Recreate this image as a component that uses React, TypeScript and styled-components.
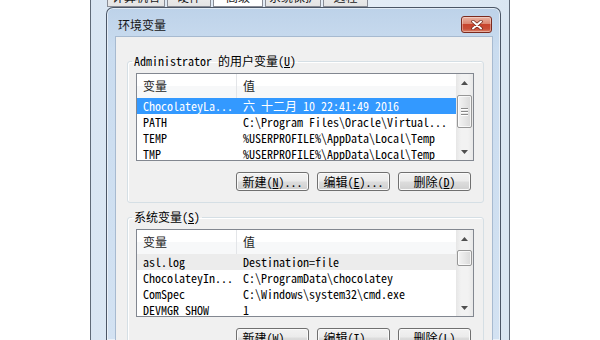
import styled, { createGlobalStyle } from "styled-components";

const GlobalStyle = createGlobalStyle`
    html, body {
        margin: 0;
        padding: 0;
        background: #ffffff;
    }
    body {
        width: 600px;
        height: 340px;
        overflow: hidden;
        font-family: "Noto Sans Mono CJK SC", "Liberation Mono", "Noto Sans CJK SC", monospace;
        font-size: 12px;
        color: #000;
    }
`;

const Desktop = styled.div`
    width: 600px;
    height: 340px;
    padding-left: 90px;
    box-sizing: border-box;
    overflow: hidden;
`;

const OuterWindow = styled.div`
    width: 420px;
    height: 340px;
    box-sizing: border-box;
    border-left: 1px solid #5f6a78;
    border-right: 1px solid #5f6a78;
    background: linear-gradient(to right, #d9e6f3, #e6eef7 60%, #dae6f2);
    padding-left: 15px;
    display: flex;
    flex-direction: column;
    overflow: hidden;
`;

const TabStrip = styled.div`
    height: 7px;
    display: flex;
    align-items: flex-end;
    gap: 2px;
    padding-left: 1px;
    overflow: hidden;
    flex-shrink: 0;
`;

const Tab = styled.div<{ $w: number; $active?: boolean }>`
    width: ${(p) => p.$w}px;
    height: 20px;
    flex-shrink: 0;
    box-sizing: border-box;
    padding-top: 2px;
    line-height: 14px;
    text-align: center;
    border: 1px solid #898c95;
    font-family: "Noto Sans CJK SC", sans-serif;
    font-size: 12px;
    color: #1a1a1a;
    background: ${(p) =>
        p.$active ? "#ffffff" : "linear-gradient(#f2f2f2, #e4e4e4)"};
`;

const Dialog = styled.div`
    width: 395px;
    flex: 1;
    min-height: 0;
    box-sizing: border-box;
    border: 1px solid #4b5666;
    border-bottom: none;
    border-radius: 7px 7px 0 0;
    background: linear-gradient(180deg, #bdd2e9 0%, #cadcef 12%, #d3e2f2 100%);
    box-shadow: inset 0 0 0 1px rgba(255, 255, 255, 0.55);
    padding: 0 7px 0 8px;
    display: flex;
    flex-direction: column;
`;

const TitleBar = styled.div`
    height: 28px;
    display: flex;
    align-items: flex-start;
    justify-content: space-between;
    padding: 0 1px 0 3px;
    flex-shrink: 0;
`;

const TitleText = styled.span`
    font-family: "Noto Sans CJK SC", sans-serif;
    font-size: 12px;
    line-height: 16px;
    margin-top: 9px;
    color: #141414;
`;

const CloseButton = styled.div`
    width: 31px;
    height: 17px;
    margin-top: 8px;
    box-sizing: border-box;
    border: 1px solid #7b2a1e;
    border-radius: 3px;
    background: linear-gradient(
        180deg,
        #eab2a3 0%,
        #dc8670 45%,
        #c8442d 50%,
        #c94f38 80%,
        #dd8a72 100%
    );
    box-shadow: inset 0 0 0 1px rgba(255, 255, 255, 0.35);
    display: flex;
    align-items: center;
    justify-content: center;
`;

const Client = styled.div`
    flex: 1;
    background: #f0f0f0;
    border: 1px solid #a7bad0;
    border-bottom: none;
    padding: 17px 8px 0 11px;
    display: flex;
    flex-direction: column;
`;

const Group = styled.fieldset<{ $gapTop?: number }>`
    margin: ${(p) => p.$gapTop || 0}px 0 0 0;
    padding: 5px 9px 11px 8px;
    border: 1px solid #d5dfe5;
    border-radius: 3px;
    box-shadow: inset 1px 1px 0 #ffffff;
    min-width: 0;
    flex-shrink: 0;
`;

const GroupLabel = styled.legend`
    padding: 0 2px;
    margin-left: -4px;
    line-height: 14px;
    font-size: 12px;
    color: #000;
`;

const ListBox = styled.div`
    height: 88px;
    box-sizing: border-box;
    border: 1px solid #828790;
    background: #ffffff;
    display: flex;
    overflow: hidden;
`;

const ListBody = styled.div`
    flex: 1;
    min-width: 0;
    overflow: hidden;
`;

const HeaderRow = styled.div`
    height: 24px;
    display: grid;
    grid-template-columns: 100px 1fr;
    background: linear-gradient(#ffffff 50%, #f7f8f9 50%);
`;

const HeaderCell = styled.div<{ $divider?: boolean }>`
    padding-left: 6px;
    line-height: 24px;
    color: #1e1e1e;
    border-right: ${(p) => (p.$divider ? "1px solid #e3e5e8" : "none")};
`;

const Row = styled.div<{ $state?: "selected" | "hover" }>`
    height: 16px;
    display: grid;
    grid-template-columns: 100px 1fr;
    line-height: 16px;
    white-space: nowrap;
    background: ${(p) =>
        p.$state === "selected" ? "#3399ff" : p.$state === "hover" ? "#ececec" : "transparent"};
    color: ${(p) => (p.$state === "selected" ? "#ffffff" : "#000000")};
`;

const Cell = styled.div`
    padding-left: 6px;
    overflow: hidden;
`;

const ScrollBar = styled.div`
    width: 17px;
    flex-shrink: 0;
    background: linear-gradient(to right, #e6e6e6, #f2f2f2 30%, #f2f2f2 70%, #e8e8e8);
    display: flex;
    flex-direction: column;
`;

const Arrow = styled.div`
    height: 17px;
    flex-shrink: 0;
    display: flex;
    align-items: center;
    justify-content: center;
`;

const Track = styled.div`
    flex: 1;
    display: flex;
    flex-direction: column;
`;

const Thumb = styled.div<{ $top: number; $h: number }>`
    margin: ${(p) => p.$top}px 1px 0 1px;
    height: ${(p) => p.$h}px;
    box-sizing: border-box;
    border: 1px solid #979797;
    border-radius: 2px;
    background: linear-gradient(to right, #f4f4f4, #e7e7e7 50%, #d9d9d9);
    box-shadow: inset 0 0 0 1px rgba(255, 255, 255, 0.7);
    display: flex;
    flex-direction: column;
    align-items: center;
    justify-content: center;
    gap: 2px;
`;

const GripLine = styled.div`
    width: 7px;
    height: 1px;
    background: #8a8a8a;
    box-shadow: 0 1px 0 #ffffff;
`;

const ButtonRow = styled.div`
    display: flex;
    justify-content: flex-end;
    gap: 8px;
    margin-top: 11px;
    padding-right: 3px;
`;

const Button = styled.div`
    width: 73px;
    height: 19px;
    box-sizing: border-box;
    border: 1px solid #707070;
    border-radius: 3px;
    background: linear-gradient(#f2f2f2 0%, #ebebeb 48%, #dddddd 52%, #cfcfcf 100%);
    box-shadow: inset 0 0 0 1px #fafafa;
    text-align: center;
    line-height: 17px;
    font-size: 12px;
    white-space: nowrap;
`;

function ArrowIcon({ down }: { down?: boolean }) {
    return (
        <svg width="7" height="4" viewBox="0 0 7 4">
            <path d={down ? "M0 0 H7 L3.5 4 Z" : "M0 4 H7 L3.5 0 Z"} fill="#505050" />
        </svg>
    );
}

interface IVar {
    name: string;
    value: string;
    state?: "selected" | "hover";
}

function VarList(props: { rows: IVar[]; thumbTop: number; thumbH: number; grip?: boolean }) {
    return (
        <ListBox>
            <ListBody>
                <HeaderRow>
                    <HeaderCell $divider>变量</HeaderCell>
                    <HeaderCell>值</HeaderCell>
                </HeaderRow>
                {props.rows.map((r) => (
                    <Row key={r.name} $state={r.state}>
                        <Cell>{r.name}</Cell>
                        <Cell>{r.value}</Cell>
                    </Row>
                ))}
            </ListBody>
            <ScrollBar>
                <Arrow>
                    <ArrowIcon />
                </Arrow>
                <Track>
                    <Thumb $top={props.thumbTop} $h={props.thumbH}>
                        {props.grip && (
                            <>
                                <GripLine />
                                <GripLine />
                                <GripLine />
                            </>
                        )}
                    </Thumb>
                </Track>
                <Arrow>
                    <ArrowIcon down />
                </Arrow>
            </ScrollBar>
        </ListBox>
    );
}

const userVars: IVar[] = [
    { name: "ChocolateyLa...", value: "六 十二月 10 22:41:49 2016", state: "selected" },
    { name: "PATH", value: "C:\\Program Files\\Oracle\\Virtual..." },
    { name: "TEMP", value: "%USERPROFILE%\\AppData\\Local\\Temp" },
    { name: "TMP", value: "%USERPROFILE%\\AppData\\Local\\Temp" },
];

const systemVars: IVar[] = [
    { name: "asl.log", value: "Destination=file", state: "hover" },
    { name: "ChocolateyIn...", value: "C:\\ProgramData\\chocolatey" },
    { name: "ComSpec", value: "C:\\Windows\\system32\\cmd.exe" },
    { name: "DEVMGR_SHOW", value: "1" },
];

export default function App() {
    return (
        <Desktop>
            <GlobalStyle />
            <OuterWindow>
                <TabStrip>
                    <Tab $w={58}>计算机名</Tab>
                    <Tab $w={44}>硬件</Tab>
                    <Tab $w={50} $active>高级</Tab>
                    <Tab $w={56}>系统保护</Tab>
                    <Tab $w={45}>远程</Tab>
                </TabStrip>
                <Dialog>
                    <TitleBar>
                        <TitleText>环境变量</TitleText>
                        <CloseButton>
                            <svg width="12" height="10" viewBox="0 0 12 10">
                                <path d="M2 1.5 L10 8.5 M10 1.5 L2 8.5" stroke="#6e2418" strokeWidth="3.4" strokeLinecap="round" />
                                <path d="M2 1.5 L10 8.5 M10 1.5 L2 8.5" stroke="#ffffff" strokeWidth="2" strokeLinecap="round" />
                            </svg>
                        </CloseButton>
                    </TitleBar>
                    <Client>
                        <Group>
                            <GroupLabel>
                                Administrator 的用户变量(<u>U</u>)
                            </GroupLabel>
                            <VarList rows={userVars} thumbTop={4} thumbH={33} grip />
                            <ButtonRow>
                                <Button>新建(<u>N</u>)...</Button>
                                <Button>编辑(<u>E</u>)...</Button>
                                <Button>删除(<u>D</u>)</Button>
                            </ButtonRow>
                        </Group>
                        <Group $gapTop={7}>
                            <GroupLabel>
                                系统变量(<u>S</u>)
                            </GroupLabel>
                            <VarList rows={systemVars} thumbTop={3} thumbH={16} />
                            <ButtonRow>
                                <Button>新建(<u>W</u>)...</Button>
                                <Button>编辑(<u>I</u>)...</Button>
                                <Button>删除(<u>L</u>)</Button>
                            </ButtonRow>
                        </Group>
                    </Client>
                </Dialog>
            </OuterWindow>
        </Desktop>
    );
}
